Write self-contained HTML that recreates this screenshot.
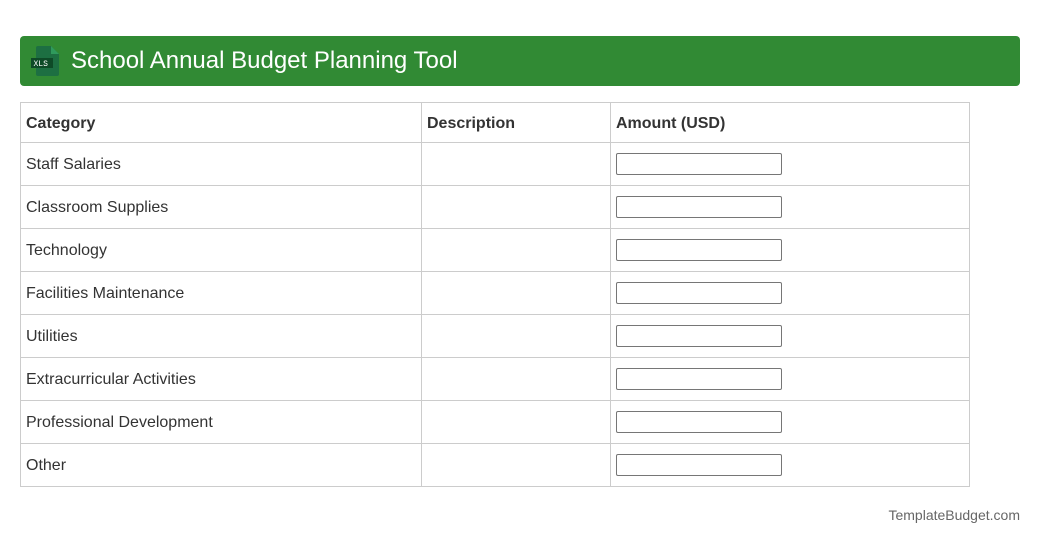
<!DOCTYPE html>
<html><head><style>
body{margin:0;background:#fff;font-family:"Liberation Sans",Arial,sans-serif;color:#333;}
.hdr{position:absolute;left:20px;top:36px;width:1000px;height:50px;background:#318a34;border-radius:4px;}
.hdr .t{position:absolute;left:51px;top:11px;font-size:24px;color:#fff;}
.ic{position:absolute;left:11px;top:10px;}
table{position:absolute;left:20px;top:102px;width:950px;border-collapse:collapse;font-size:16px;}
td,th{border:1px solid #ccc;padding:2px 5px 0;text-align:left;height:40px;}
th{font-weight:bold;height:37px;}
td:nth-child(1),th:nth-child(1){width:390px;}
td:nth-child(2),th:nth-child(2){width:178px;}
.in{width:164px;height:20px;border:1px solid #767676;border-radius:2px;margin-top:-3px;}
.ft{position:absolute;right:20px;top:507px;font-size:14px;color:#666;}
</style></head><body>
<div class="hdr">
<svg class="ic" width="29" height="30" viewBox="0 0 29 30"><path d="M7 0h13l8 8v20a2 2 0 0 1-2 2H7a2 2 0 0 1-2-2V2a2 2 0 0 1 2-2z" fill="#1d6f42"/><path d="M20 0v8h8z" fill="#2f9a5c"/><rect x="0" y="12" width="22" height="10" fill="#0e4a27"/><text x="2.5" y="20" font-size="8" fill="#fff" font-family="Liberation Mono">XLS</text></svg>
<div class="t">School Annual Budget Planning Tool</div></div>
<table>
<tr><th>Category</th><th>Description</th><th>Amount (USD)</th></tr>
<tr><td>Staff Salaries</td><td></td><td><div class="in"></div></td></tr>
<tr><td>Classroom Supplies</td><td></td><td><div class="in"></div></td></tr>
<tr><td>Technology</td><td></td><td><div class="in"></div></td></tr>
<tr><td>Facilities Maintenance</td><td></td><td><div class="in"></div></td></tr>
<tr><td>Utilities</td><td></td><td><div class="in"></div></td></tr>
<tr><td>Extracurricular Activities</td><td></td><td><div class="in"></div></td></tr>
<tr><td>Professional Development</td><td></td><td><div class="in"></div></td></tr>
<tr><td>Other</td><td></td><td><div class="in"></div></td></tr>
</table>
<div class="ft">TemplateBudget.com</div>
</body></html>
